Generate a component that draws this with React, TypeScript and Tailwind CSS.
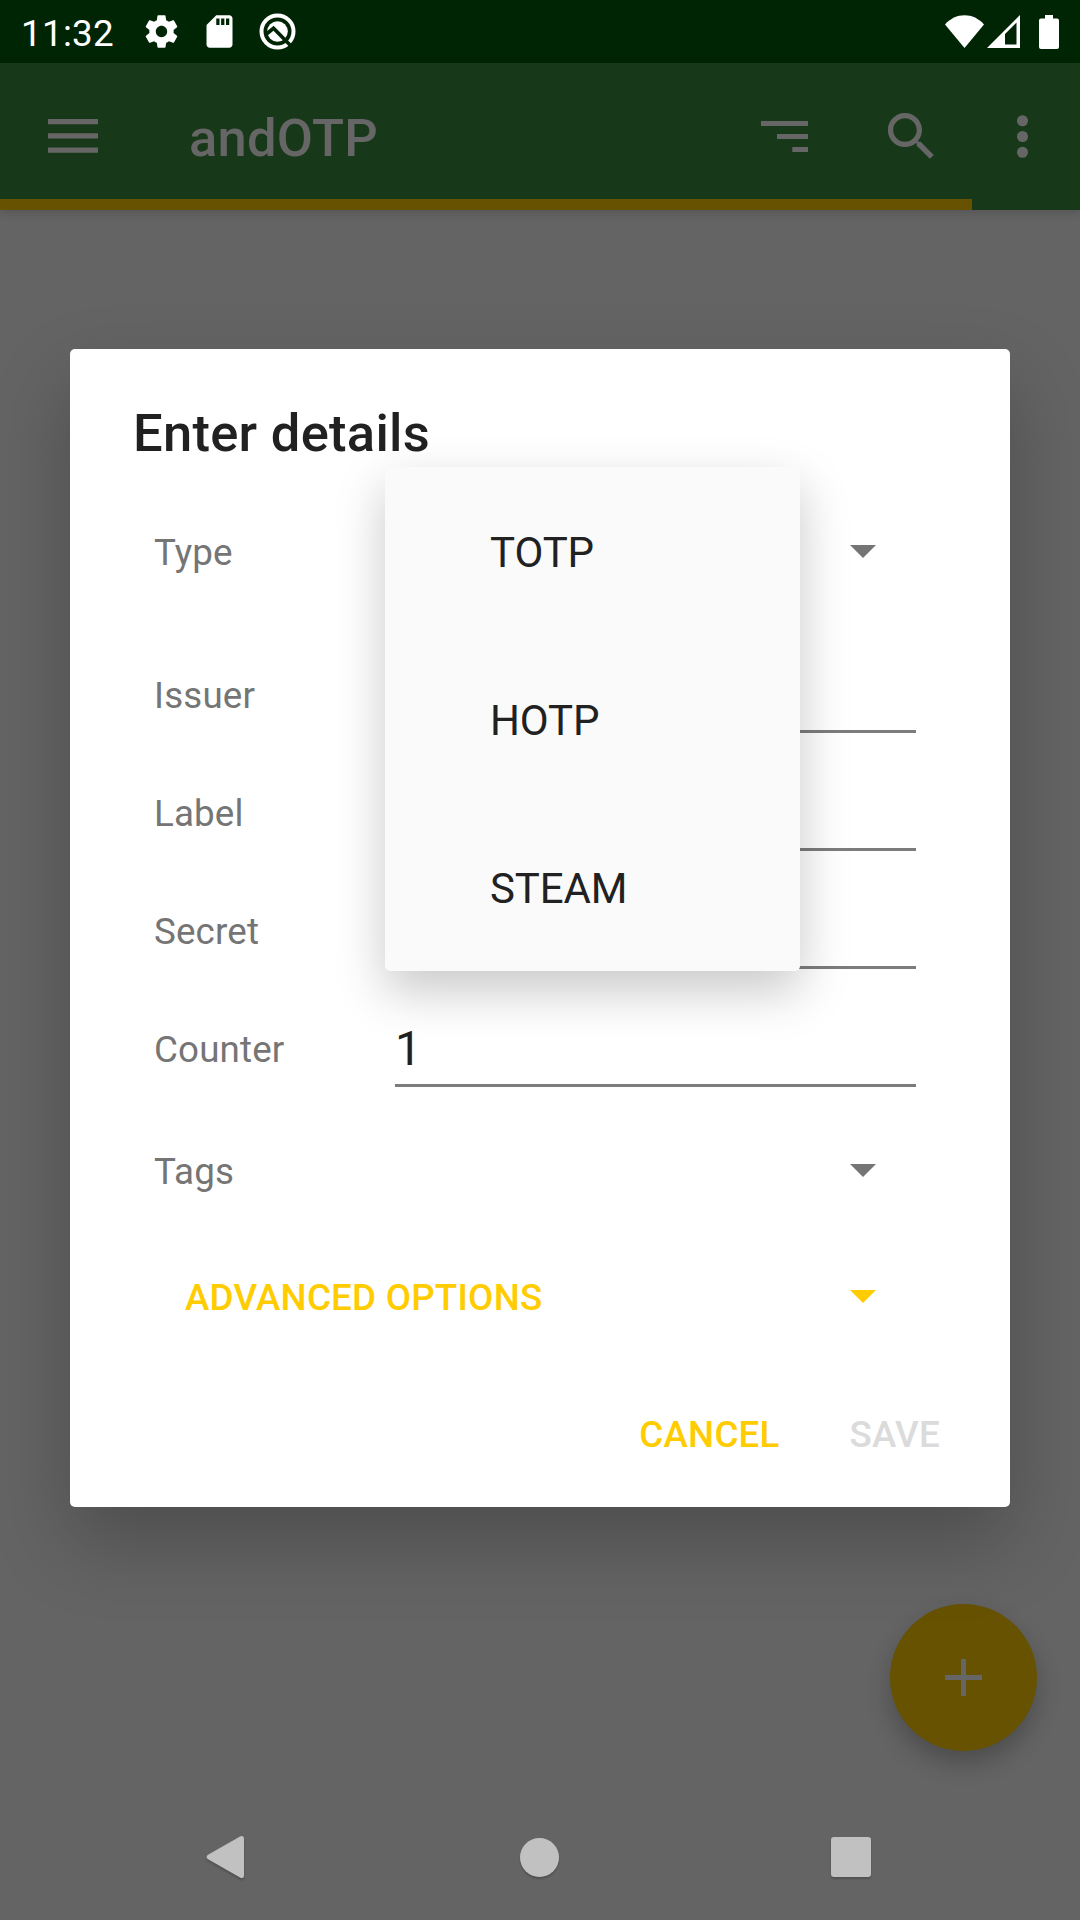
import React from "react";

function StatusBar() {
  return (
    <header className="flex h-[63px] items-center bg-[#002504] pl-[21px] pr-[15px] text-white">
      <span className="w-[114px] pt-[4px] text-[36.75px] leading-[42px] tracking-[0.3px]">11:32</span>
      <div className="ml-[7px] flex items-center gap-[19px]">
        <svg className="size-[39px]" viewBox="0 0 24 24" fill="currentColor">
          <path d="M19.43 12.98c.04-.32.07-.64.07-.98s-.03-.66-.07-.98l2.11-1.65c.19-.15.24-.42.12-.64l-2-3.46c-.12-.22-.39-.3-.61-.22l-2.49 1c-.52-.4-1.08-.73-1.69-.98l-.38-2.65C14.46 2.18 14.25 2 14 2h-4c-.25 0-.46.18-.49.42l-.38 2.65c-.61.25-1.17.59-1.69.98l-2.49-1c-.23-.09-.49 0-.61.22l-2 3.46c-.13.22-.07.49.12.64l2.11 1.65c-.04.32-.07.65-.07.98s.03.66.07.98l-2.11 1.65c-.19.15-.24.42-.12.64l2 3.46c.12.22.39.3.61.22l2.49-1c.52.4 1.08.73 1.69.98l.38 2.65c.03.24.24.42.49.42h4c.25 0 .46-.18.49-.42l.38-2.65c.61-.25 1.17-.59 1.69-.98l2.49 1c.23.09.49 0 .61-.22l2-3.46c.12-.22.07-.49-.12-.64l-2.11-1.65zM12 15.5c-1.93 0-3.5-1.57-3.5-3.5s1.57-3.5 3.5-3.5 3.5 1.57 3.5 3.5-1.57 3.5-3.5 3.5z" />
        </svg>
        <svg className="size-[39px]" viewBox="0 0 24 24" fill="currentColor">
          <path d="M18 2h-8L4.02 8 4 20c0 1.1.9 2 2 2h12c1.1 0 2-.9 2-2V4c0-1.1-.9-2-2-2zm-6 6h-2V4h2v4zm3 0h-2V4h2v4zm3 0h-2V4h2v4z" />
        </svg>
        <svg className="size-[39px]" viewBox="0 0 39 39" fill="none">
          <circle cx="19.5" cy="19.5" r="16" stroke="currentColor" strokeWidth="4" />
          <circle cx="19.5" cy="19.5" r="10.3" fill="currentColor" />
          <path d="M8.5 22l7-5.700L33 34" stroke="#002504" strokeWidth="3.600" />
        </svg>
      </div>
      <div className="ml-auto flex items-center">
        <svg className="h-[33px] w-[39px]" viewBox="0 0 40 33" preserveAspectRatio="none" fill="currentColor">
          <path d="M0 9.5C5.500 3.500 12.500.300 20 .300s14.500 3.200 20 9.200L20 33z" />
        </svg>
        <svg className="ml-[3px] h-[33px] w-[33px]" viewBox="0 0 33 33" fill="currentColor" fillRule="evenodd">
          <path d="M0 33L33 0v33zM18 19v10.500h11.500V7.500z" />
        </svg>
        <svg className="ml-[19px] mr-[6px] h-[34px] w-[20px]" viewBox="0 0 20 34" fill="currentColor">
          <path d="M6 0h8v3.500h4a2 2 0 0 1 2 2V32a2 2 0 0 1-2 2H2a2 2 0 0 1-2-2V5.500a2 2 0 0 1 2-2h4z" />
        </svg>
      </div>
    </header>
  );
}

function Toolbar() {
  return (
    <div className="h-[147px] bg-[#183919] text-[#666666] shadow-[0_3px_9px_rgba(0,0,0,0.15)]">
      <div className="flex h-[136px] items-center pt-[10px]">
        <svg className="ml-[48px] h-[34px] w-[50px]" viewBox="0 0 50 34" fill="currentColor">
          <path d="M0 0h50v5.200H0zM0 14.200h50v5.200H0zM0 28.500h50v5.300H0z" />
        </svg>
        <h1 className="ml-[91px] pt-[4px] text-[52.5px] font-medium leading-[60px] tracking-[0.25px]">andOTP</h1>
        <svg className="ml-auto h-[31px] w-[47px]" viewBox="0 0 47 31" fill="currentColor">
          <path d="M0 0h47v5H0zM16 13h31v5H16zM31.300 26H47v5H31.300z" />
        </svg>
        <svg className="ml-[72px] size-[63px]" viewBox="0 0 24 24" fill="currentColor">
          <path d="M15.500 14h-.790l-.280-.270C15.410 12.590 16 11.110 16 9.500 16 5.910 13.090 3 9.500 3S3 5.910 3 9.500 5.910 16 9.500 16c1.610 0 3.090-.590 4.230-1.570l.270.280v.790l5 4.990L20.490 19l-4.990-5zm-6 0C7.010 14 5 11.990 5 9.500S7.010 5 9.500 5 14 7.010 14 9.500 11.990 14 9.500 14z" />
        </svg>
        <svg className="ml-[48px] mr-[26px] size-[63px]" viewBox="0 0 24 24" fill="currentColor">
          <circle cx="12" cy="6" r="2.100" />
          <circle cx="12" cy="12" r="2.100" />
          <circle cx="12" cy="18" r="2.100" />
        </svg>
      </div>
      <div className="h-[11px] w-[971.5px] bg-[#665200]" />
    </div>
  );
}

function Caret() {
  return (
    <svg className="mb-[3px] h-[13px] w-[26px] shrink-0" viewBox="0 0 26 13" fill="currentColor">
      <path d="M0 0h26L13 13z" />
    </svg>
  );
}

function Field({ label, value }: { label: string; value?: string }) {
  return (
    <div className="flex h-[118px] pl-[63px] text-[36.75px] text-[#757575]">
      <label className="w-[241px] pt-[38px] leading-[44px] tracking-[0.15px]">{label}</label>
      <div className="h-[97px] w-[521px] border-b-[3px] border-[#7c7c7c] pt-[34px] text-[47.25px] leading-[50px] text-[#212121]">
        {value}
      </div>
    </div>
  );
}

function TypeMenu() {
  return (
    <ul className="absolute left-[315px] top-[118px] h-[504px] w-[415px] rounded-[5px] bg-[#fafafa] text-[42px] tracking-[-0.1px] text-[#212121] shadow-[0_20px_50px_rgba(0,0,0,0.22)]">
      {["TOTP", "HOTP", "STEAM"].map((type) => (
        <li key={type} className="flex h-[168px] items-center pl-[105px] pt-[4px] leading-[50px]">
          {type}
        </li>
      ))}
    </ul>
  );
}

function DetailsDialog() {
  return (
    <section className="relative mx-[70px] mt-[139px] flex h-[1158px] flex-col rounded-[5px] bg-white px-[21px] shadow-[0_35px_80px_rgba(0,0,0,0.23)]">
      <h2 className="pl-[42px] pt-[54px] text-[52.5px] font-medium leading-[60px] tracking-[0.28px] text-[#212121]">
        Enter details
      </h2>
      <div className="mt-[68px] flex h-[44px] items-center pl-[63px] pr-[113px] text-[36.75px] leading-[44px] tracking-[0.15px] text-[#757575]">
        <span>Type</span>
        <span className="ml-auto flex"><Caret /></span>
      </div>
      <div className="mt-[61px]">
        <Field label="Issuer" />
        <Field label="Label" />
        <Field label="Secret" />
        <Field label="Counter" value="1" />
      </div>
      <div className="mt-[42px] flex h-[44px] items-center pl-[63px] pr-[113px] text-[36.75px] leading-[44px] tracking-[0.15px] text-[#757575]">
        <span>Tags</span>
        <span className="ml-auto flex"><Caret /></span>
      </div>
      <button className="mt-[82px] flex h-[44px] items-center pl-[94px] pr-[113px] text-[36.75px] font-medium leading-[44px] tracking-[0.22px] text-[#ffcc00]">
        <span>ADVANCED OPTIONS</span>
        <span className="ml-auto flex"><Caret /></span>
      </button>
      <div className="mt-[93px] flex justify-end gap-[70px] pr-[49px] text-[36.75px] font-medium leading-[44px] tracking-[0.2px]">
        <button className="text-[#ffcc00]">CANCEL</button>
        <button className="text-[#dbdbdb]">SAVE</button>
      </div>
      <TypeMenu />
    </section>
  );
}

function NavigationBar() {
  return (
    <nav className="mt-auto flex h-[126px] items-center pl-[206px] pr-[209px] text-[#c1c1c1]">
      <svg className="h-[44px] w-[38px] drop-shadow-[0_2px_1px_rgba(0,0,0,0.2)]" viewBox="0 0 38 44" fill="currentColor">
        <path d="M1.600 20L34.500 1.200Q38 0 38 3.500v37Q38 44 34.500 42.800L1.600 24Q-.400 22 1.600 20z" />
      </svg>
      <span className="ml-[276px] size-[39px] rounded-full bg-[#c1c1c1] shadow-[0_2px_2px_rgba(0,0,0,0.2)]" />
      <span className="ml-auto size-[40px] rounded-[3px] bg-[#c1c1c1] shadow-[0_2px_2px_rgba(0,0,0,0.2)]" />
    </nav>
  );
}

export default function App() {
  return (
    <main className="flex h-[1920px] w-[1080px] flex-col overflow-hidden bg-[#646464] font-['Roboto',sans-serif]">
      <StatusBar />
      <Toolbar />
      <DetailsDialog />
      <button className="ml-auto mr-[43px] mt-[97px] flex size-[147px] shrink-0 items-center justify-center rounded-full bg-[#665200] text-[#666666] shadow-[0_12px_24px_rgba(0,0,0,0.24)]">
        <svg className="size-[37px]" viewBox="0 0 37 37" fill="currentColor">
          <path d="M16 0h5v16h16v5H21v16h-5V21H0v-5h16z" />
        </svg>
      </button>
      <NavigationBar />
    </main>
  );
}
